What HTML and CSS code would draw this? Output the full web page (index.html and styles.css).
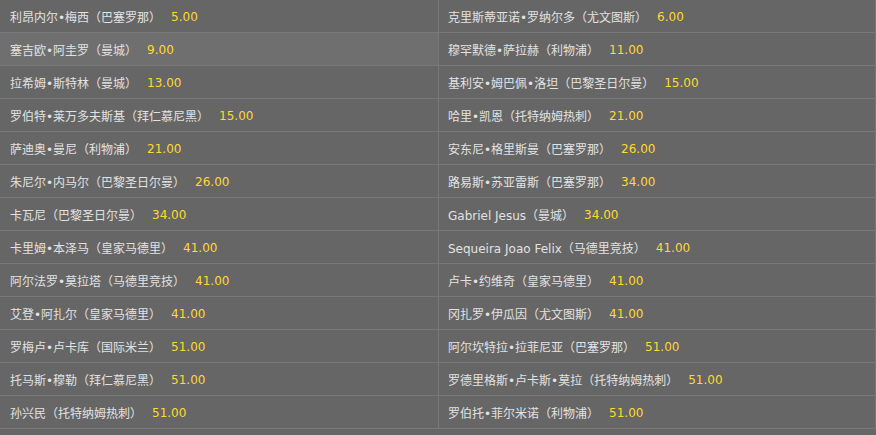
FILE: index.html
```html
<!DOCTYPE html>
<html lang="zh-CN">
<head>
    <meta charset="UTF-8">
    <title>赔率</title>
    <link rel="stylesheet" href="styles.css">
</head>
<body>
    <div class="odds-table">
        <div class="cell"><span class="name">利昂内尔•梅西（巴塞罗那）</span><span class="odd">5.00</span></div>
        <div class="cell"><span class="name">克里斯蒂亚诺•罗纳尔多（尤文图斯）</span><span class="odd">6.00</span></div>
        <div class="cell hover"><span class="name">塞吉欧•阿圭罗（曼城）</span><span class="odd">9.00</span></div>
        <div class="cell"><span class="name">穆罕默德•萨拉赫（利物浦）</span><span class="odd">11.00</span></div>
        <div class="cell"><span class="name">拉希姆•斯特林（曼城）</span><span class="odd">13.00</span></div>
        <div class="cell"><span class="name">基利安•姆巴佩•洛坦（巴黎圣日尔曼）</span><span class="odd">15.00</span></div>
        <div class="cell"><span class="name">罗伯特•莱万多夫斯基（拜仁慕尼黑）</span><span class="odd">15.00</span></div>
        <div class="cell"><span class="name">哈里•凯恩（托特纳姆热刺）</span><span class="odd">21.00</span></div>
        <div class="cell"><span class="name">萨迪奥•曼尼（利物浦）</span><span class="odd">21.00</span></div>
        <div class="cell"><span class="name">安东尼•格里斯曼（巴塞罗那）</span><span class="odd">26.00</span></div>
        <div class="cell"><span class="name">朱尼尔•内马尔（巴黎圣日尔曼）</span><span class="odd">26.00</span></div>
        <div class="cell"><span class="name">路易斯•苏亚雷斯（巴塞罗那）</span><span class="odd">34.00</span></div>
        <div class="cell"><span class="name">卡瓦尼（巴黎圣日尔曼）</span><span class="odd">34.00</span></div>
        <div class="cell"><span class="name">Gabriel Jesus（曼城）</span><span class="odd">34.00</span></div>
        <div class="cell"><span class="name">卡里姆•本泽马（皇家马德里）</span><span class="odd">41.00</span></div>
        <div class="cell"><span class="name">Sequeira Joao Felix（马德里竞技）</span><span class="odd">41.00</span></div>
        <div class="cell"><span class="name">阿尔法罗•莫拉塔（马德里竞技）</span><span class="odd">41.00</span></div>
        <div class="cell"><span class="name">卢卡•约维奇（皇家马德里）</span><span class="odd">41.00</span></div>
        <div class="cell"><span class="name">艾登•阿扎尔（皇家马德里）</span><span class="odd">41.00</span></div>
        <div class="cell"><span class="name">冈扎罗•伊瓜因（尤文图斯）</span><span class="odd">41.00</span></div>
        <div class="cell"><span class="name">罗梅卢•卢卡库（国际米兰）</span><span class="odd">51.00</span></div>
        <div class="cell"><span class="name">阿尔坎特拉•拉菲尼亚（巴塞罗那）</span><span class="odd">51.00</span></div>
        <div class="cell"><span class="name">托马斯•穆勒（拜仁慕尼黑）</span><span class="odd">51.00</span></div>
        <div class="cell"><span class="name">罗德里格斯•卢卡斯•莫拉（托特纳姆热刺）</span><span class="odd">51.00</span></div>
        <div class="cell"><span class="name">孙兴民（托特纳姆热刺）</span><span class="odd">51.00</span></div>
        <div class="cell"><span class="name">罗伯托•菲尔米诺（利物浦）</span><span class="odd">51.00</span></div>
    </div>
</body>
</html>
```

FILE: styles.css
```css
body {
    margin: 0;
    background: #666;
    font-family: "DejaVu Sans", "Noto Sans CJK SC", sans-serif;
    font-size: 12px;
    color: #e2e2e2;
}
.odds-table {
    display: grid;
    grid-template-columns: 439px 437px;
    width: 876px;
}
.cell {
    display: flex;
    align-items: center;
    height: 31px;
    padding: 1px 0 0 10px;
    border-bottom: 1px solid #787878;
    border-right: 1px solid #787878;
    white-space: nowrap;
}
.cell:nth-child(even) {
    padding-left: 9px;
}
.cell.hover {
    background: #6f6f6f;
}
.odd {
    margin-left: 10px;
    color: #ffd92e;
}
```
